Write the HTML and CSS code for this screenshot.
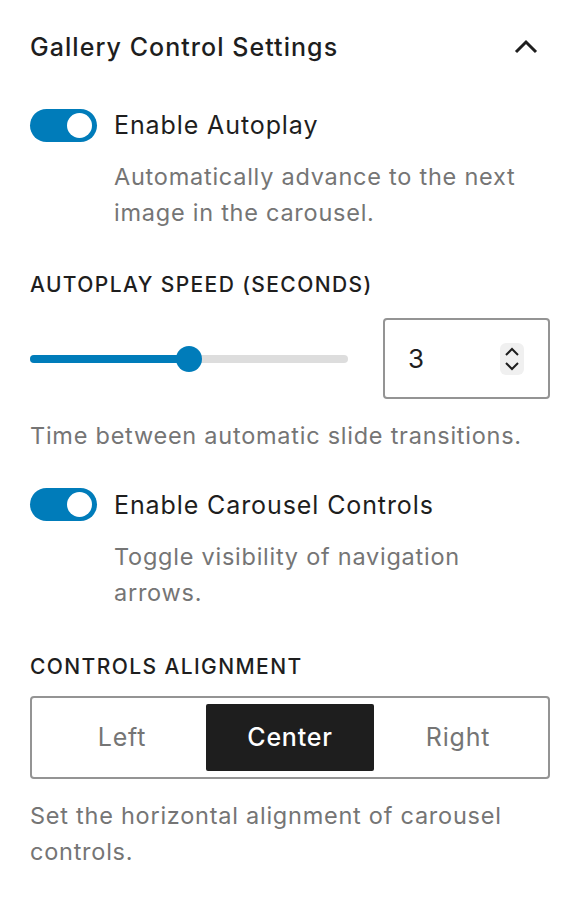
FILE: index.html
```html
<!DOCTYPE html>
<html lang="en">
<head>
<meta charset="utf-8">
<title>Gallery Control Settings</title>
<link rel="stylesheet" href="styles.css">
</head>
<body>
<div class="panel">
  <div class="panel-header">
    <h2 class="panel-title">Gallery Control Settings</h2>
    <svg class="chevron" width="24" height="24" viewBox="0 0 24 24"><path d="M2 17 L12 7 L22 17" fill="none" stroke="#1e1e1e" stroke-width="3"/></svg>
  </div>

  <div class="toggle-row first">
    <span class="toggle"><span class="knob"></span></span>
    <span class="toggle-label">Enable Autoplay</span>
  </div>
  <p class="help indent">Automatically advance to the next image in the carousel.</p>

  <div class="field-label">Autoplay Speed (Seconds)</div>
  <div class="range-row">
    <div class="range">
      <div class="track"><div class="fill" style="width: 50%"></div></div>
      <div class="thumb" style="left: 50%"></div>
    </div>
    <div class="number">
      <span class="number-value">3</span>
      <span class="spinner">
        <svg width="24" height="32" viewBox="0 0 24 32"><path d="M6 12 L12 6 L18 12" fill="none" stroke="#1e1e1e" stroke-width="2"/><path d="M6 20 L12 26 L18 20" fill="none" stroke="#1e1e1e" stroke-width="2"/></svg>
      </span>
    </div>
  </div>
  <p class="help after-range">Time between automatic slide transitions.</p>

  <div class="toggle-row second">
    <span class="toggle"><span class="knob"></span></span>
    <span class="toggle-label">Enable Carousel Controls</span>
  </div>
  <p class="help indent">Toggle visibility of navigation arrows.</p>

  <div class="field-label second">Controls Alignment</div>
  <div class="segmented">
    <span class="seg">Left</span>
    <span class="seg active">Center</span>
    <span class="seg">Right</span>
  </div>
  <p class="help after-seg">Set the horizontal alignment of carousel controls.</p>
</div>
</body>
</html>
```
FILE: styles.css
```css
* { box-sizing: border-box; }
html, body { margin: 0; padding: 0; background: #fff; }
body {
  font-family: Inter, "Noto Sans", "Liberation Sans", sans-serif;
  color: #1e1e1e;
}
.panel { padding: 30px 30px 0 30px; width: 580px; }
.panel-header {
  display: flex;
  align-items: center;
  justify-content: space-between;
  height: 34px;
}
.panel-title {
  margin: 0;
  font-size: 25px;
  font-weight: 500;
  line-height: 34px;
  letter-spacing: 1.05px;
}
.chevron { margin-right: 12px; }

.toggle-row {
  display: flex;
  align-items: center;
  height: 34px;
  gap: 17px;
}
.toggle-row.first { margin-top: 44px; }
.toggle-row.second { margin-top: 33.5px; }
.toggle {
  position: relative;
  width: 67px;
  height: 33px;
  border-radius: 17px;
  background: #007cba;
  flex: none;
}
.knob {
  position: absolute;
  right: 5px;
  top: 4px;
  width: 25px;
  height: 25px;
  border-radius: 50%;
  background: #fff;
}
.toggle-label { font-size: 25px; line-height: 34px; letter-spacing: 0.9px; }

.help {
  margin: 0;
  font-size: 23.5px;
  line-height: 36px;
  color: #757575;
  letter-spacing: 0.75px;
}
.help.indent { margin-left: 84px; margin-top: 17px; }
.help.after-range { margin-top: 19px; }
.help.after-seg { margin-top: 19px; }

.field-label {
  margin-top: 39px;
  font-size: 21px;
  font-weight: 500;
  line-height: 30px;
  text-transform: uppercase;
  letter-spacing: 1.4px;
}
.field-label.second { margin-top: 41px; }

.range-row {
  display: flex;
  align-items: center;
  gap: 35px;
  margin-top: 18px;
}
.range {
  position: relative;
  width: 318px;
  height: 26px;
  flex: none;
}
.track {
  position: absolute;
  left: 0; right: 0;
  top: 9px;
  height: 8px;
  border-radius: 4px;
  background: #dddddd;
}
.fill { height: 100%; border-radius: 4px; background: #007cba; }
.thumb {
  position: absolute;
  top: 0;
  width: 26px;
  height: 26px;
  margin-left: -13px;
  border-radius: 50%;
  background: #007cba;
}
.number {
  width: 167px;
  height: 81px;
  border: 2px solid #949494;
  border-radius: 4px;
  display: flex;
  align-items: center;
  justify-content: space-between;
  padding: 0 24px 0 23px;
}
.number-value { font-size: 26px; }
.spinner {
  display: flex;
  background: #f0f0f0;
  border-radius: 6px;
}

.segmented {
  margin-top: 14px;
  height: 83px;
  border: 2px solid #949494;
  border-radius: 4px;
  display: flex;
  padding: 6px;
}
.seg {
  flex: 1;
  display: flex;
  align-items: center;
  justify-content: center;
  font-size: 25px;
  color: #757575;
  border-radius: 2px;
  letter-spacing: 0.8px;
}
.seg.active { background: #1e1e1e; color: #fff; font-weight: 500; }
```
